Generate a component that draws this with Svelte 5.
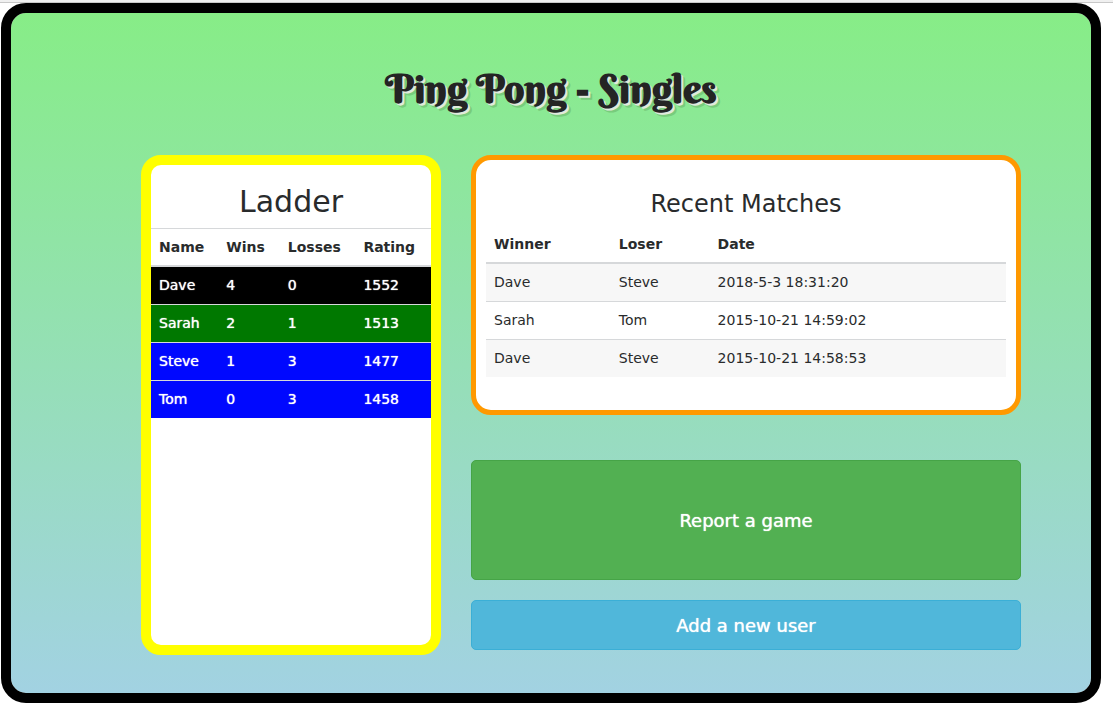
<script>
  const players = [
    { name: 'Dave', wins: 4, losses: 0, rating: 1552, tier: 'black' },
    { name: 'Sarah', wins: 2, losses: 1, rating: 1513, tier: 'green' },
    { name: 'Steve', wins: 1, losses: 3, rating: 1477, tier: 'blue' },
    { name: 'Tom', wins: 0, losses: 3, rating: 1458, tier: 'blue' }
  ];
  const matches = [
    { winner: 'Dave', loser: 'Steve', date: '2018-5-3 18:31:20' },
    { winner: 'Sarah', loser: 'Tom', date: '2015-10-21 14:59:02' },
    { winner: 'Dave', loser: 'Steve', date: '2015-10-21 14:58:53' }
  ];
</script>

<div class="strip"></div>
<main>
  <h1>Ping Pong - Singles</h1>
  <div class="board">
    <section class="ladder">
      <h2>Ladder</h2>
      <table>
        <colgroup><col class="c-name" /><col class="c-wins" /><col class="c-stat" /><col class="c-stat" /></colgroup>
        <thead>
          <tr><th>Name</th><th>Wins</th><th>Losses</th><th>Rating</th></tr>
        </thead>
        <tbody>
          {#each players as p}
            <tr class={p.tier}><td>{p.name}</td><td>{p.wins}</td><td>{p.losses}</td><td>{p.rating}</td></tr>
          {/each}
        </tbody>
      </table>
    </section>
    <div class="side">
      <section class="recent">
        <h3>Recent Matches</h3>
        <table>
          <colgroup><col class="c-winner" /><col class="c-loser" /><col /></colgroup>
          <thead>
            <tr><th>Winner</th><th>Loser</th><th>Date</th></tr>
          </thead>
          <tbody>
            {#each matches as m}
              <tr><td>{m.winner}</td><td>{m.loser}</td><td>{m.date}</td></tr>
            {/each}
          </tbody>
        </table>
      </section>
      <button class="report" type="button">Report a game</button>
      <button class="add" type="button">Add a new user</button>
    </div>
  </div>
</main>

<style>
  :global(body) {
    margin: 0;
    background: #fff;
    color: #292b2c;
    font: 14px/21px Verdana, "DejaVu Sans", sans-serif;
  }
  .strip {
    box-sizing: border-box;
    height: 3px;
    background: #f0f0f0;
    border-bottom: 1px solid #c8c8c8;
  }
  main {
    box-sizing: border-box;
    margin: 0 12px 0 1px;
    padding: 50px 0 38px;
    border: 10px solid #000;
    border-radius: 25px;
    background: linear-gradient(#87ed87, #a2d2e2) padding-box;
  }
  h1 {
    margin: 0 0 40px;
    color: #242424;
    font: bold 40px/52px "Berkshire Swash", "Liberation Serif", serif;
    text-align: center;
    text-shadow: 2px 2px 0 #e0eadc, 4px 4px 0 #78cc7c;
  }
  .board {
    display: grid;
    grid-template-columns: 6fr 11fr;
    gap: 30px;
    padding: 0 70px 0 130px;
  }
  section {
    box-sizing: border-box;
    background: #fff;
    border-radius: 20px;
  }
  .ladder {
    height: 500px;
    padding-top: 17px;
    border: 10px solid #ff0;
  }
  h2, h3 {
    margin: 0;
    font-weight: 400;
    text-align: center;
  }
  h2 {
    padding-bottom: 6px;
    font-size: 30px;
    line-height: 40px;
  }
  h3 {
    padding: 26px 0 8px;
    font-size: 24px;
    line-height: 36px;
  }
  table {
    width: 100%;
    table-layout: fixed;
    border-collapse: separate;
    border-spacing: 0;
  }
  th, td {
    padding: 8px;
    text-align: left;
    white-space: nowrap;
    border-top: 1px solid #d6d8da;
  }
  th {
    padding-bottom: 7px;
    border-bottom: 2px solid #d6d8da;
  }
  tbody tr:first-child td {
    border-top: 0;
  }
  .c-name { width: 24%; }
  .c-wins { width: 22%; }
  .c-stat { width: 27%; }
  .c-winner { width: 24%; }
  .c-loser { width: 19%; }
  .ladder td {
    color: #fff;
    text-shadow: 0 0 1px #fff;
  }
  .black { background: #000; }
  .green { background: #007800; }
  .blue { background: #0008ff; }
  .side {
    display: flex;
    flex-direction: column;
  }
  .recent {
    height: 260px;
    padding: 0 10px;
    border: 5px solid #ff9900;
  }
  .recent th {
    padding-top: 4px;
    border-top: 0;
  }
  .recent tbody tr:nth-child(odd) {
    background: #f7f7f7;
  }
  button {
    border-radius: 5px;
    color: #fff;
    font: 18px/27px Verdana, "DejaVu Sans", sans-serif;
    text-shadow: 0 0 1px #fff;
    cursor: pointer;
  }
  .report {
    height: 120px;
    margin-top: 45px;
    background: #52b052;
    border: 1px solid #46a447;
  }
  .add {
    height: 50px;
    margin-top: 20px;
    background: #50b7da;
    border: 1px solid #3bafd6;
  }
</style>
